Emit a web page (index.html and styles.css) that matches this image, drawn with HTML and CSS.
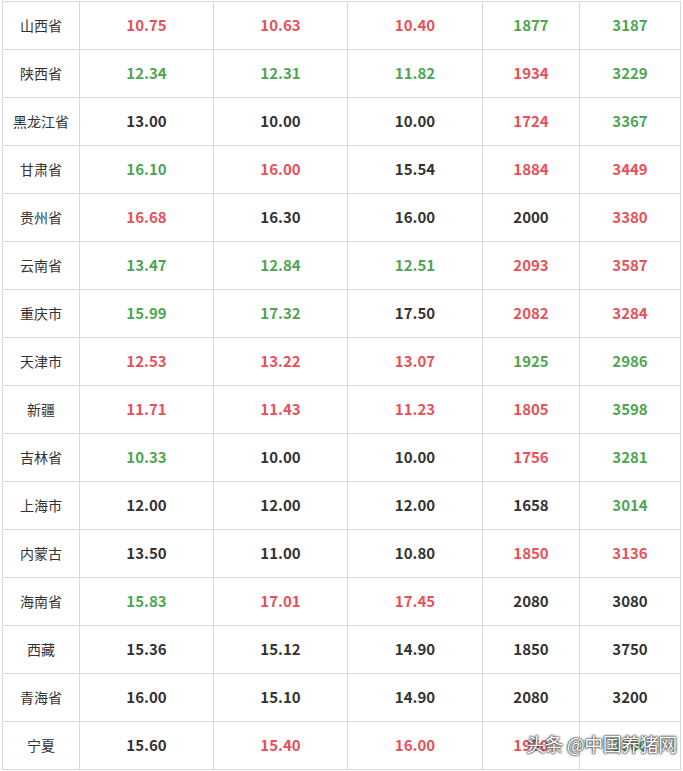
FILE: index.html
```html
<!DOCTYPE html>
<html lang="zh-CN">
<head>
<meta charset="utf-8">
<link rel="stylesheet" href="styles.css">
</head>
<body>
<div class="wrap">
<table class="price-table">
<colgroup>
<col class="c1"><col class="c2"><col class="c3"><col class="c4"><col class="c5"><col class="c6">
</colgroup>
<tbody>
<tr><td class="name">山西省</td><td class="r">10.75</td><td class="r">10.63</td><td class="r">10.40</td><td class="g">1877</td><td class="g">3187</td></tr>
<tr><td class="name">陕西省</td><td class="g">12.34</td><td class="g">12.31</td><td class="g">11.82</td><td class="r">1934</td><td class="g">3229</td></tr>
<tr><td class="name">黑龙江省</td><td>13.00</td><td>10.00</td><td>10.00</td><td class="r">1724</td><td class="g">3367</td></tr>
<tr><td class="name">甘肃省</td><td class="g">16.10</td><td class="r">16.00</td><td>15.54</td><td class="r">1884</td><td class="r">3449</td></tr>
<tr><td class="name">贵州省</td><td class="r">16.68</td><td>16.30</td><td>16.00</td><td>2000</td><td class="r">3380</td></tr>
<tr><td class="name">云南省</td><td class="g">13.47</td><td class="g">12.84</td><td class="g">12.51</td><td class="r">2093</td><td class="r">3587</td></tr>
<tr><td class="name">重庆市</td><td class="g">15.99</td><td class="g">17.32</td><td>17.50</td><td class="r">2082</td><td class="r">3284</td></tr>
<tr><td class="name">天津市</td><td class="r">12.53</td><td class="r">13.22</td><td class="r">13.07</td><td class="g">1925</td><td class="g">2986</td></tr>
<tr><td class="name">新疆</td><td class="r">11.71</td><td class="r">11.43</td><td class="r">11.23</td><td class="r">1805</td><td class="g">3598</td></tr>
<tr><td class="name">吉林省</td><td class="g">10.33</td><td>10.00</td><td>10.00</td><td class="r">1756</td><td class="g">3281</td></tr>
<tr><td class="name">上海市</td><td>12.00</td><td>12.00</td><td>12.00</td><td>1658</td><td class="g">3014</td></tr>
<tr><td class="name">内蒙古</td><td>13.50</td><td>11.00</td><td>10.80</td><td class="r">1850</td><td class="r">3136</td></tr>
<tr><td class="name">海南省</td><td class="g">15.83</td><td class="r">17.01</td><td class="r">17.45</td><td>2080</td><td>3080</td></tr>
<tr><td class="name">西藏</td><td>15.36</td><td>15.12</td><td>14.90</td><td>1850</td><td>3750</td></tr>
<tr><td class="name">青海省</td><td>16.00</td><td>15.10</td><td>14.90</td><td>2080</td><td>3200</td></tr>
<tr><td class="name">宁夏</td><td>15.60</td><td class="r">15.40</td><td class="r">16.00</td><td class="r">1950</td><td class="g">3300</td></tr>
</tbody>
</table>
<div class="watermark">头条 @中国养猪网</div>
</div>
</body>
</html>
```

FILE: styles.css
```css
html, body {
  margin: 0;
  padding: 0;
  background: #ffffff;
}
.wrap {
  position: relative;
  width: 683px;
  height: 771px;
  overflow: hidden;
}
.price-table {
  margin: 1px 0 0 2px;
  border-collapse: collapse;
  table-layout: fixed;
  width: 678px;
  font-family: "Noto Sans CJK SC", "Noto Sans", sans-serif;
  color: #333333;
}
.c1 { width: 77px; }
.c2 { width: 134px; }
.c3 { width: 134px; }
.c4 { width: 135px; }
.c5 { width: 97px; }
.c6 { width: 101px; }
.price-table td {
  border: 1px solid #d9d9d9;
  height: 45px;
  padding: 0 0 2px 0;
  text-align: center;
  vertical-align: middle;
  font-size: 15px;
  font-weight: 700;
  line-height: 20px;
}
.price-table td.name {
  font-size: 14px;
  font-weight: 400;
  color: #333333;
}
.price-table td.r { color: #e8505a; }
.price-table td.g { color: #4ea552; }
.watermark {
  position: absolute;
  left: 526px;
  top: 731px;
  font-family: "Noto Sans CJK SC", sans-serif;
  font-size: 19px;
  line-height: 26px;
  color: #ffffff;
  letter-spacing: -0.5px;
  text-shadow: 0 0 1px #222, 0 0 2px #222, 0 0 3px rgba(0,0,0,0.6);
  white-space: nowrap;
}
```
